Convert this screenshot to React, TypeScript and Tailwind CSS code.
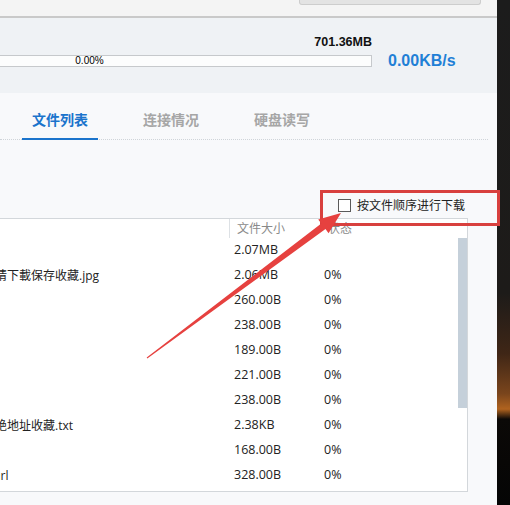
import React from 'react';

const rows = [
    { name: '', ml: '', size: '2.07MB', status: '' },
    { name: '请下載保存收藏.jpg', ml: '-ml-[5px]', size: '2.06MB', status: '0%' },
    { name: '', ml: '', size: '260.00B', status: '0%' },
    { name: '', ml: '', size: '238.00B', status: '0%' },
    { name: '', ml: '', size: '189.00B', status: '0%' },
    { name: '', ml: '', size: '221.00B', status: '0%' },
    { name: '', ml: '', size: '238.00B', status: '0%' },
    { name: '绝地址收藏.txt', ml: '-ml-[5px]', size: '2.38KB', status: '0%' },
    { name: '', ml: '', size: '168.00B', status: '0%' },
    { name: '.url', ml: '-ml-[10px]', size: '328.00B', status: '0%' },
];

const App: React.FC = () => {
    return (
        <div className="relative w-[510px] h-[505px] flex overflow-hidden font-['Open_Sans','Noto_Sans_CJK_SC',sans-serif] text-[#333]">
            {/* main panel */}
            <div className="w-[497px] flex flex-col">
                {/* top strip with button edge */}
                <div className="h-[16px] bg-[#f4f4f4] flex justify-end pr-[16px]">
                    <div className="w-[182px] h-[5px] bg-[#e3e3e3] border border-t-0 border-[#cdcdcd] rounded-b-[3px]"></div>
                </div>
                <div className="h-[2px] bg-[#c9c9c9]"></div>

                {/* progress area */}
                <div className="h-[75px] bg-[#eff2f5] flex items-start">
                    <div className="w-[372px] pt-[16px] flex flex-col items-end">
                        <span className="font-['Liberation_Sans',sans-serif] font-bold text-[12.5px] leading-[16px] text-[#111]">701.36MB</span>
                        <div className="mt-[5px] w-full h-[12px] bg-[#fcfdfd] border border-l-0 border-[#c6c9cc] flex items-center">
                            <span className="w-[179px] text-center font-['Liberation_Sans',sans-serif] text-[10px] leading-[10px] text-black">0.00%</span>
                        </div>
                    </div>
                    <div className="pl-[16px] pt-[34px] font-['Liberation_Sans',sans-serif] font-bold text-[16px] leading-[18px] text-[#1f80d6]">0.00KB/s</div>
                </div>

                {/* content area */}
                <div className="flex-1 bg-[#f8f9fb] flex flex-col">
                    {/* tabs */}
                    <div className="flex gap-[35px] pl-[22px] mr-[9px] border-b border-dotted border-[#cfd4d9] font-['Noto_Sans_CJK_SC',sans-serif] text-[14px] leading-[20px] font-bold">
                        <div className="px-[10px] pt-[16px] pb-[9px] -mb-px border-b-2 border-[#1b74cc] text-[#1b74cc]">文件列表</div>
                        <div className="px-[10px] pt-[16px] pb-[9px] -mb-px border-b-2 border-transparent text-[#a6a6a6]">连接情况</div>
                        <div className="px-[10px] pt-[16px] pb-[9px] -mb-px border-b-2 border-transparent text-[#a6a6a6]">硬盘读写</div>
                    </div>

                    {/* order option */}
                    <div className="mt-[57px] h-[16px] flex items-center justify-end pr-[32px] gap-[6px]">
                        <div className="w-[13px] h-[13px] border border-[#5a5a5a] bg-white"></div>
                        <span className="text-[12px] leading-[16px] text-[#222] font-['Noto_Sans_CJK_SC',sans-serif]">按文件顺序进行下载</span>
                    </div>

                    {/* file table */}
                    <div className="mt-[5px] mr-[29px] bg-white border-t border-r border-b border-[#d3d7db] flex flex-col">
                        <div className="h-[19px] flex text-[12px] leading-[17px] text-[#8a8a8a] font-['Noto_Sans_CJK_SC',sans-serif]">
                            <div className="w-[230px] border-r border-[#dde1e5]"></div>
                            <div className="w-[90px] pl-[7px]">文件大小</div>
                            <div className="pl-[8px]">状态</div>
                        </div>
                        <div className="flex pb-[3px]">
                            <div className="flex-1 flex flex-col">
                                {rows.map((r, i) => (
                                    <div key={i} className="h-[25px] flex items-center text-[12.5px]">
                                        <div className="w-[231px] overflow-hidden whitespace-nowrap">
                                            <span className={`block text-[12px] text-[#222] ${r.ml}`}>{r.name}</span>
                                        </div>
                                        <div className="w-[90px] pl-[3px] text-[#222]">{r.size}</div>
                                        <div className="pl-[3px] text-[#222]">{r.status}</div>
                                    </div>
                                ))}
                            </div>
                            <div className="w-[9px]">
                                <div className="h-[170px] bg-[#c5d0da]"></div>
                            </div>
                        </div>
                    </div>
                </div>
            </div>

            {/* desktop strip on the right */}
            <div className="flex-1 bg-[linear-gradient(to_bottom,#1c1c1c_0%,#1d1b19_58%,#3f2616_70%,#7a451c_78%,#b0631f_81%,#0b0907_83%,#050505_100%)]"></div>

            {/* annotation: red box */}
            <div className="absolute left-[320px] top-[190px] w-[180px] h-[36px] border-[3px] border-[#d8403e] pointer-events-none"></div>

            {/* annotation: red arrow */}
            <svg className="absolute left-0 top-0 pointer-events-none" width="510" height="505" viewBox="0 0 510 505">
                <polygon
                    points="147.3,358.4 325.5,229 328.6,233.2 341,213 318.2,219.4 321.3,223.4 146.7,357.6"
                    fill="#e6413f"
                />
            </svg>
        </div>
    );
};

export default App;
